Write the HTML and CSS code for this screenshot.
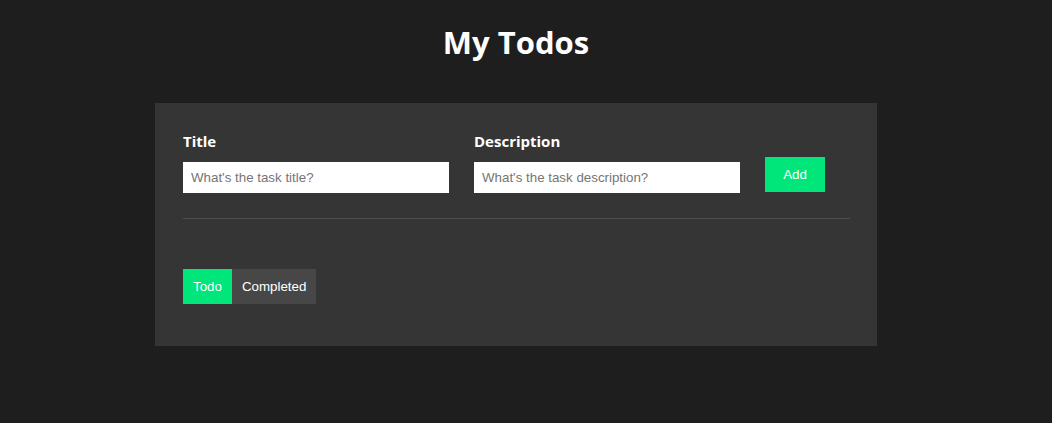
FILE: index.html
```html
<!DOCTYPE html>
<html>
<head>
<meta charset="utf-8">
<link rel="stylesheet" href="styles.css">
</head>
<body>
<div class="app">
  <h1 class="page-title">My Todos</h1>
  <div class="todo-wrapper">
    <div class="todo-input">
      <div class="todo-input-item">
        <label class="field-label">Title</label>
        <input class="field-input" type="text" placeholder="What's the task title?">
      </div>
      <div class="todo-input-item">
        <label class="field-label">Description</label>
        <input class="field-input" type="text" placeholder="What's the task description?">
      </div>
      <div class="todo-input-item">
        <button class="primary-btn" type="button">Add</button>
      </div>
    </div>
    <div class="btn-area">
      <button class="tab-btn active" type="button">Todo</button>
      <button class="tab-btn" type="button">Completed</button>
    </div>
  </div>
</div>
</body>
</html>
```
FILE: styles.css
```css
html, body {
  margin: 0;
  padding: 0;
}
body {
  background: #1e1e1e;
  color: #ffffff;
  font-family: "Open Sans", "Noto Sans", sans-serif;
  min-height: 423px;
}
.app {
  padding: 8px 28px 8px 8px;
}
.page-title {
  margin: 15px 0 0;
  height: 80px;
  line-height: 38px;
  text-align: center;
  font-size: 31px;
  font-weight: 700;
}
.todo-wrapper {
  background: #353535;
  width: 667px;
  margin: 0 auto;
  padding: 28px 27px 42px 28px;
}
.todo-input {
  display: flex;
  align-items: center;
  border-bottom: 1px solid #4e4e4e;
  padding-bottom: 25px;
  margin-bottom: 50px;
}
.todo-input-item {
  display: flex;
  flex-direction: column;
  align-items: flex-start;
  margin-right: 25px;
}
.field-label {
  font-weight: 700;
  font-size: 15px;
  line-height: 21px;
  margin-bottom: 10px;
}
.field-input {
  width: 250px;
  padding: 8px;
  border: none;
  border-radius: 0;
  outline: none;
  font-family: "Liberation Sans", Arial, sans-serif;
  font-size: 13.33px;
  line-height: 15px;
  height: 15px;
  box-sizing: content-box;
  background: #ffffff;
  color: #222;
}
.field-input::placeholder {
  color: #757575;
}
.primary-btn {
  background: #00e67a;
  color: #ffffff;
  border: none;
  border-radius: 0;
  width: 60px;
  height: 35px;
  margin-top: 24px;
  font-family: "Liberation Sans", Arial, sans-serif;
  font-size: 13.33px;
}
.btn-area {
  display: flex;
}
.tab-btn {
  background: #474747;
  color: #ffffff;
  border: none;
  border-radius: 0;
  height: 35px;
  padding: 0 10px;
  font-family: "Liberation Sans", Arial, sans-serif;
  font-size: 13.33px;
  font-weight: 400;
}
.tab-btn.active {
  background: #00e67a;
}
```
